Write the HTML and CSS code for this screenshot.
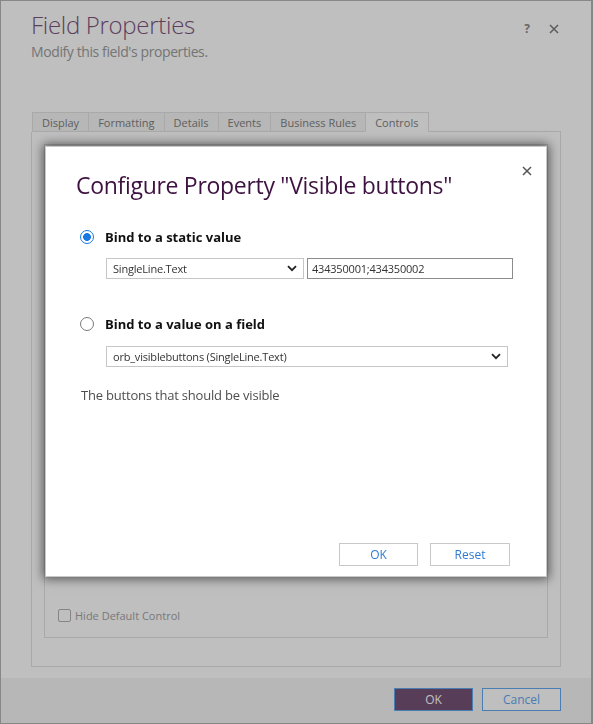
FILE: index.html
```html
<!DOCTYPE html>
<html lang="en">
<head>
<meta charset="utf-8">
<title>Field Properties</title>
<link rel="stylesheet" href="styles.css">
</head>
<body>
<div class="window">
  <header class="win-header">
    <div class="win-titles">
      <h1 class="win-title">Field Properties</h1>
      <p class="win-subtitle">Modify this field's properties.</p>
    </div>
    <div class="win-actions">
      <span class="help">?</span>
      <svg class="win-close" width="10" height="10" viewBox="0 0 10 10"><path d="M1 1 L9 9 M9 1 L1 9" stroke="#7a7a7a" stroke-width="1.5" fill="none"/></svg>
    </div>
  </header>
  <main class="win-body">
    <nav class="tabs">
      <span class="tab">Display</span>
      <span class="tab">Formatting</span>
      <span class="tab">Details</span>
      <span class="tab">Events</span>
      <span class="tab">Business Rules</span>
      <span class="tab active">Controls</span>
      <span class="tabs-fill"></span>
    </nav>
    <section class="panel">
      <div class="controls-box">
        <label class="check"><span class="check-box"></span>Hide Default Control</label>
      </div>
    </section>
  </main>
  <footer class="win-footer">
    <button class="btn-primary">OK</button>
    <button class="btn-secondary">Cancel</button>
  </footer>
</div>

<div class="backdrop"></div>

<div class="dialog">
  <div class="dlg-head">
    <h2 class="dlg-title">Configure Property "Visible buttons"</h2>
    <svg class="dlg-close" width="10" height="10" viewBox="0 0 10 10"><path d="M1 1 L9 9 M9 1 L1 9" stroke="#555" stroke-width="1.5" fill="none"/></svg>
  </div>

  <div class="opt opt-first">
    <span class="radio checked"></span>
    <span class="opt-label">Bind to a static value</span>
  </div>
  <div class="field-row">
    <div class="select select-type">
      <span class="select-text">SingleLine.Text</span>
      <svg class="chev" width="10" height="7" viewBox="0 0 10 7"><path d="M1 1.2 L5 5.2 L9 1.2" stroke="#222" stroke-width="1.8" fill="none"/></svg>
    </div>
    <div class="text-input">434350001;434350002</div>
  </div>

  <div class="opt opt-second">
    <span class="radio"></span>
    <span class="opt-label">Bind to a value on a field</span>
  </div>
  <div class="field-row">
    <div class="select select-field">
      <span class="select-text">orb_visiblebuttons (SingleLine.Text)</span>
      <svg class="chev" width="10" height="7" viewBox="0 0 10 7"><path d="M1 1.2 L5 5.2 L9 1.2" stroke="#222" stroke-width="1.8" fill="none"/></svg>
    </div>
  </div>

  <p class="dlg-desc">The buttons that should be visible</p>

  <div class="dlg-actions">
    <button class="btn-light btn-ok">OK</button>
    <button class="btn-light btn-reset">Reset</button>
  </div>
</div>
</body>
</html>
```

FILE: styles.css
```css
* { box-sizing: border-box; }

html, body {
  margin: 0;
  padding: 0;
}

body {
  width: 593px;
  height: 724px;
  overflow: hidden;
  position: relative;
  background: #fff;
  font-family: "Open Sans", "Noto Sans", sans-serif;
}

/* ---------- underlying window ---------- */
.window {
  width: 593px;
  height: 724px;
  border: 1px solid #b4b4b4;
  border-right-width: 2px;
  display: flex;
  flex-direction: column;
  background: #fff;
}

.win-header {
  height: 111px;
  flex: none;
  padding: 8px 0 0 30px;
  display: flex;
  justify-content: space-between;
  align-items: flex-start;
}

.win-title {
  margin: 0;
  font-size: 24px;
  font-weight: 300;
  line-height: 32px;
  color: #7c537c;
  letter-spacing: -0.3px;
}

.win-subtitle {
  margin: 2px 0 0 0;
  font-size: 14px;
  line-height: 18px;
  color: #9c9c9c;
  letter-spacing: -0.4px;
}

.win-actions {
  display: flex;
  align-items: center;
  gap: 19px;
  margin-top: 13px;
  padding-right: 32px;
}

.help {
  font-size: 12px;
  font-weight: 700;
  color: #8a8a8a;
  line-height: 14px;
}

.win-close { display: block; }

.win-body {
  flex: 1;
  display: flex;
  flex-direction: column;
  padding: 0 30px 11px 30px;
}

.tabs {
  display: flex;
  height: 20px;
  flex: none;
}

.tab {
  padding: 0 9px;
  font-size: 11px;
  line-height: 19px;
  color: #808080;
  background: #f4f4f4;
  border: 1px solid #e2e2e2;
  border-right: none;
}

.tab:first-child { margin-left: 1px; }

.tab.active {
  background: #fff;
  border-right: 1px solid #e2e2e2;
  border-bottom-color: #fff;
}

.tabs-fill {
  flex: 1;
  border-bottom: 1px solid #e2e2e2;
}

.panel {
  flex: 1;
  border: 1px solid #e2e2e2;
  border-top: none;
  padding: 12px 12px 28px 12px;
  display: flex;
}

.controls-box {
  flex: 1;
  border: 1px solid #e2e2e2;
  display: flex;
  flex-direction: column;
  justify-content: flex-end;
  padding: 0 0 14px 13px;
}

.check {
  display: flex;
  align-items: center;
  gap: 4px;
  font-size: 11px;
  line-height: 15px;
  color: #a2a2a2;
}

.check-box {
  width: 13px;
  height: 13px;
  border: 1px solid #b2b2b2;
  border-radius: 2px;
  background: #fff;
}

.win-footer {
  height: 45px;
  flex: none;
  background: #f5f5f5;
  display: flex;
  justify-content: flex-end;
  align-items: flex-start;
  gap: 9px;
  padding: 10px 30px 0 0;
}

.win-footer button {
  width: 79px;
  height: 23px;
  font-family: inherit;
  font-size: 12px;
  padding: 0;
  border: 1px solid #63a8ee;
}

.btn-primary {
  background: #765276;
  color: #fff;
}

.btn-secondary {
  background: #fff;
  color: #62a7ee;
}

/* ---------- modal ---------- */
.backdrop {
  position: fixed;
  inset: 0;
  background: rgba(0, 0, 0, 0.25);
}

.dialog {
  position: absolute;
  left: 45px;
  top: 146px;
  width: 502px;
  height: 431px;
  background: #fff;
  border: 1px solid #c8c8c8;
  box-shadow: 0 0 10px 2px rgba(0, 0, 0, 0.55);
  display: flex;
  flex-direction: column;
  padding: 18px 14px 10px 31px;
}

.dlg-head {
  display: flex;
  justify-content: space-between;
  align-items: flex-start;
}

.dlg-title {
  margin: 4px 0 0 -1px;
  font-size: 23px;
  font-weight: 400;
  line-height: 32px;
  color: #3e1240;
  letter-spacing: -0.3px;
}

.dlg-close {
  display: block;
  margin-top: 1px;
}

.opt {
  display: flex;
  align-items: center;
  height: 18px;
  padding-left: 3px;
  gap: 11px;
}

.opt-first { margin-top: 27px; }
.opt-second { margin-top: 36px; }

.opt-label {
  font-size: 13px;
  font-weight: 700;
  line-height: 18px;
  color: #111;
}

.radio {
  width: 14px;
  height: 14px;
  border-radius: 50%;
  border: 1px solid #7a7a7a;
  background: #fff;
  flex: none;
}

.radio.checked {
  border: 1.5px solid #1a78e6;
  background: radial-gradient(circle, #1a78e6 0 3.6px, #fff 4.2px);
}

.field-row {
  display: flex;
  gap: 3px;
  margin: 12px 0 0 29px;
}

.select {
  height: 21px;
  border: 1px solid #c6c6c6;
  display: flex;
  align-items: center;
  justify-content: space-between;
  padding: 0 6px 0 6px;
  background: #fff;
}

.select-type { width: 198px; }
.select-field { width: 402px; margin-top: 1px; }

.select-text,
.text-input {
  font-size: 11px;
  color: #333;
  white-space: nowrap;
  letter-spacing: -0.2px;
}

.chev { display: block; }

.text-input {
  width: 206px;
  height: 21px;
  border: 1px solid #8c8c8c;
  padding: 0 4px;
  line-height: 19px;
}

.dlg-desc {
  margin: 19px 0 0 4px;
  font-size: 13px;
  line-height: 18px;
  color: #4e4e4e;
  letter-spacing: -0.2px;
}

.dlg-actions {
  margin-top: auto;
  margin-right: 22px;
  display: flex;
  justify-content: flex-end;
  gap: 12px;
}

.btn-light {
  height: 23px;
  background: #fff;
  border: 1px solid #c8c8c8;
  color: #2f7bd6;
  font-family: inherit;
  font-size: 12px;
  padding: 0;
}

.btn-ok { width: 79px; }
.btn-reset { width: 80px; }
```
